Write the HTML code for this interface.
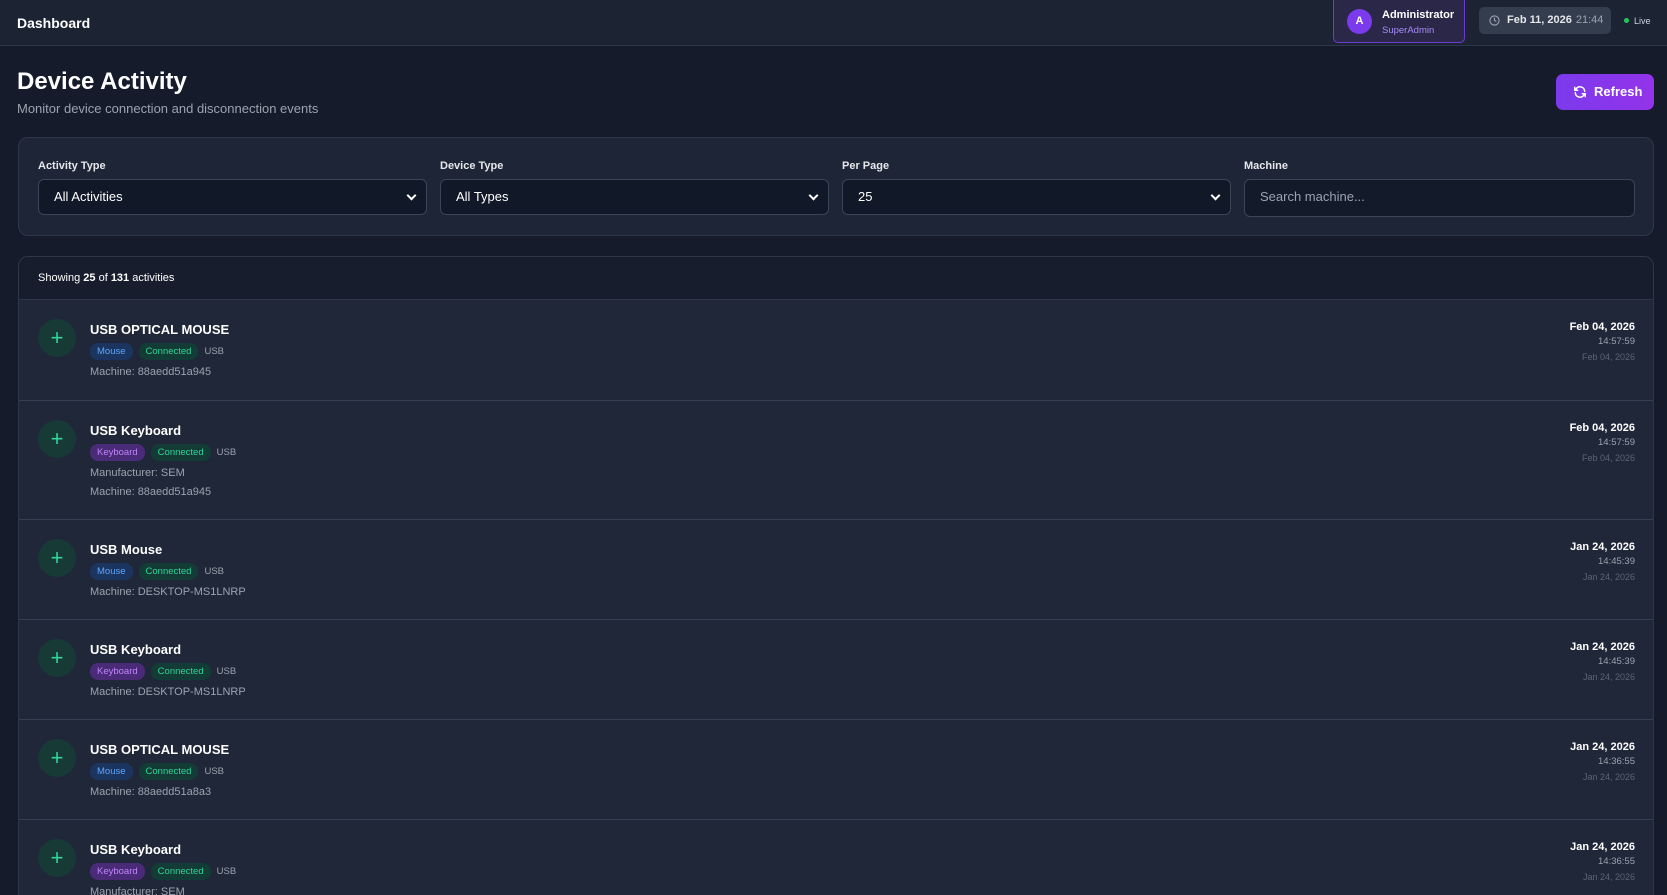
<!DOCTYPE html>
<html><head><meta charset="utf-8"><style>
*{box-sizing:border-box;margin:0;padding:0}
html,body{width:1667px;height:895px;overflow:hidden}
body{background:#151b2a;font-family:"Liberation Sans",sans-serif;color:#fff;position:relative}
.hdr{position:absolute;left:0;top:0;width:1667px;height:46px;background:#1c2333;border-bottom:1px solid #2e3747}
.hdr .t{position:absolute;left:17px;top:15px;font-size:14px;font-weight:bold}
.admin{position:absolute;left:1333px;top:0;width:132px;height:43px;border:1px solid #6d3bd1;border-top:none;border-radius:0 0 5px 5px;background:#2b2748}
.av{position:absolute;left:13px;top:9px;width:25px;height:25px;border-radius:50%;background:#7c3aed;font-size:11px;font-weight:bold;text-align:center;line-height:25px}
.admin .n{position:absolute;left:48px;top:9px;font-size:11px;font-weight:bold}
.admin .r{position:absolute;left:48px;top:25px;font-size:9.5px;color:#a78bfa}
.date{position:absolute;left:1479px;top:7px;width:132px;height:27px;background:#333d4d;border-radius:5px;font-size:11px;line-height:27px;padding-left:28px}
.date b{color:#e5e7eb}.date span{color:#9ca3af;margin-left:4px}
.live{position:absolute;left:1624px;top:16px;font-size:9px;color:#cbd5e1}
.live:before{content:"";display:inline-block;width:5px;height:5px;border-radius:50%;background:#22c55e;margin-right:5px;vertical-align:1px}
h1{position:absolute;left:17px;top:68px;font-size:24px;font-weight:bold}
.sub{position:absolute;left:17px;top:101px;font-size:13px;color:#9ca3af}
.btn{position:absolute;left:1556px;top:74px;width:98px;height:36px;border-radius:7px;background:linear-gradient(90deg,#7c3aed,#9333ea);font-size:13px;font-weight:bold;line-height:36px;padding-left:38px}
.card{position:absolute;left:18px;top:137px;width:1636px;height:99px;background:#1e2536;border:1px solid #2e3747;border-radius:10px}
.lb{position:absolute;top:22px;font-size:11px;font-weight:bold;color:#e5e7eb}
.sel{position:absolute;top:41px;height:36px;background:#111827;border:1px solid #3b4556;border-radius:6px;font-size:13px;line-height:34px;padding-left:15px}
.sel:after{content:"";position:absolute;right:11px;top:12px;width:5px;height:5px;border-right:2px solid #fff;border-bottom:2px solid #fff;transform:rotate(45deg)}
.sel.np:after{display:none}
.list{position:absolute;left:18px;top:256px;width:1636px;height:639px;background:#1b2232;border:1px solid #2e3747;border-bottom:none;border-radius:10px 10px 0 0;overflow:hidden}
.lh{height:43px;font-size:11px;padding:15px 0 0 19px;border-bottom:1px solid #2e3747;background:#171d2c}
.row{position:relative;background:#1f2738;border-bottom:1px solid #344052}
.ic{position:absolute;left:19px;top:19px;width:38px;height:38px;border-radius:50%;background:#173a37;color:#34d399;font-size:22px;text-align:center;line-height:37px}
.ti{position:absolute;left:71px;top:22px;font-size:13px;font-weight:bold}
.bd{position:absolute;left:71px;top:43px;font-size:9.5px}
.bd i{font-style:normal;display:inline-block;padding:3px 7px;border-radius:8px;margin-right:6px}
.m{background:#1c3560;color:#60a5fa}.k{background:#4a2b78;color:#c084fc}.c{background:#123c35;color:#34d399}.u{color:#9ca3af}
.ln{position:absolute;left:71px;font-size:11px;color:#9ca3af}
.rt{position:absolute;right:18px;top:21px;text-align:right}
.rt b{display:block;font-size:11px}.rt .h{font-size:9.5px;color:#9ca3af;margin-top:3px}.rt .s{font-size:9px;color:#5b6576;margin-top:5px}
</style></head><body>
<div class="hdr"><div class="t">Dashboard</div>
<div class="admin"><div class="av">A</div><div class="n">Administrator</div><div class="r">SuperAdmin</div></div>
<div class="date"><svg style="position:absolute;left:10px;top:8px" width="11" height="11" viewBox="0 0 12 12" fill="none" stroke="#9ca3af" stroke-width="1.2"><circle cx="6" cy="6" r="5"/><path d="M6 3v3l2 1"/></svg><b>Feb 11, 2026</b><span>21:44</span></div>
<div class="live">Live</div></div>
<h1>Device Activity</h1>
<div class="sub">Monitor device connection and disconnection events</div>
<div class="btn"><svg style="position:absolute;left:17px;top:11px" width="14" height="14" viewBox="0 0 24 24" fill="none" stroke="#fff" stroke-width="2.5" stroke-linecap="round"><path d="M20 11A8 8 0 0 0 5.5 6.5L3 9M3 4v5h5M4 13a8 8 0 0 0 14.5 4.5L21 15M21 20v-5h-5"/></svg>Refresh</div>
<div class="card">
<div class="lb" style="left:19px">Activity Type</div><div class="sel" style="left:19px;width:389px">All Activities</div>
<div class="lb" style="left:421px">Device Type</div><div class="sel" style="left:421px;width:389px">All Types</div>
<div class="lb" style="left:823px">Per Page</div><div class="sel" style="left:823px;width:389px">25</div>
<div class="lb" style="left:1225px">Machine</div><div class="sel np" style="left:1225px;width:391px;height:38px;color:#9ca3af;background:#131a29">Search machine...</div>
</div>
<div class="list">
<div class="lh">Showing <b>25</b> of <b>131</b> activities</div>
<div class="row" style="height:101px"><div class="ic">+</div><div class="ti">USB OPTICAL MOUSE</div><div class="bd"><i class="m">Mouse</i><i class="c">Connected</i><span class="u">USB</span></div><div class="ln" style="top:66px">Machine: 88aedd51a945</div><div class="rt"><b>Feb 04, 2026</b><div class="h">14:57:59</div><div class="s">Feb 04, 2026</div></div></div>
<div class="row" style="height:119px"><div class="ic">+</div><div class="ti">USB Keyboard</div><div class="bd"><i class="k">Keyboard</i><i class="c">Connected</i><span class="u">USB</span></div><div class="ln" style="top:66px">Manufacturer: SEM</div><div class="ln" style="top:85px">Machine: 88aedd51a945</div><div class="rt"><b>Feb 04, 2026</b><div class="h">14:57:59</div><div class="s">Feb 04, 2026</div></div></div>
<div class="row" style="height:100px"><div class="ic">+</div><div class="ti">USB Mouse</div><div class="bd"><i class="m">Mouse</i><i class="c">Connected</i><span class="u">USB</span></div><div class="ln" style="top:66px">Machine: DESKTOP-MS1LNRP</div><div class="rt"><b>Jan 24, 2026</b><div class="h">14:45:39</div><div class="s">Jan 24, 2026</div></div></div>
<div class="row" style="height:100px"><div class="ic">+</div><div class="ti">USB Keyboard</div><div class="bd"><i class="k">Keyboard</i><i class="c">Connected</i><span class="u">USB</span></div><div class="ln" style="top:66px">Machine: DESKTOP-MS1LNRP</div><div class="rt"><b>Jan 24, 2026</b><div class="h">14:45:39</div><div class="s">Jan 24, 2026</div></div></div>
<div class="row" style="height:100px"><div class="ic">+</div><div class="ti">USB OPTICAL MOUSE</div><div class="bd"><i class="m">Mouse</i><i class="c">Connected</i><span class="u">USB</span></div><div class="ln" style="top:66px">Machine: 88aedd51a8a3</div><div class="rt"><b>Jan 24, 2026</b><div class="h">14:36:55</div><div class="s">Jan 24, 2026</div></div></div>
<div class="row" style="height:76px;border-bottom:none"><div class="ic">+</div><div class="ti">USB Keyboard</div><div class="bd"><i class="k">Keyboard</i><i class="c">Connected</i><span class="u">USB</span></div><div class="ln" style="top:66px">Manufacturer: SEM</div><div class="rt"><b>Jan 24, 2026</b><div class="h">14:36:55</div><div class="s">Jan 24, 2026</div></div></div>
</div>
</body></html>
